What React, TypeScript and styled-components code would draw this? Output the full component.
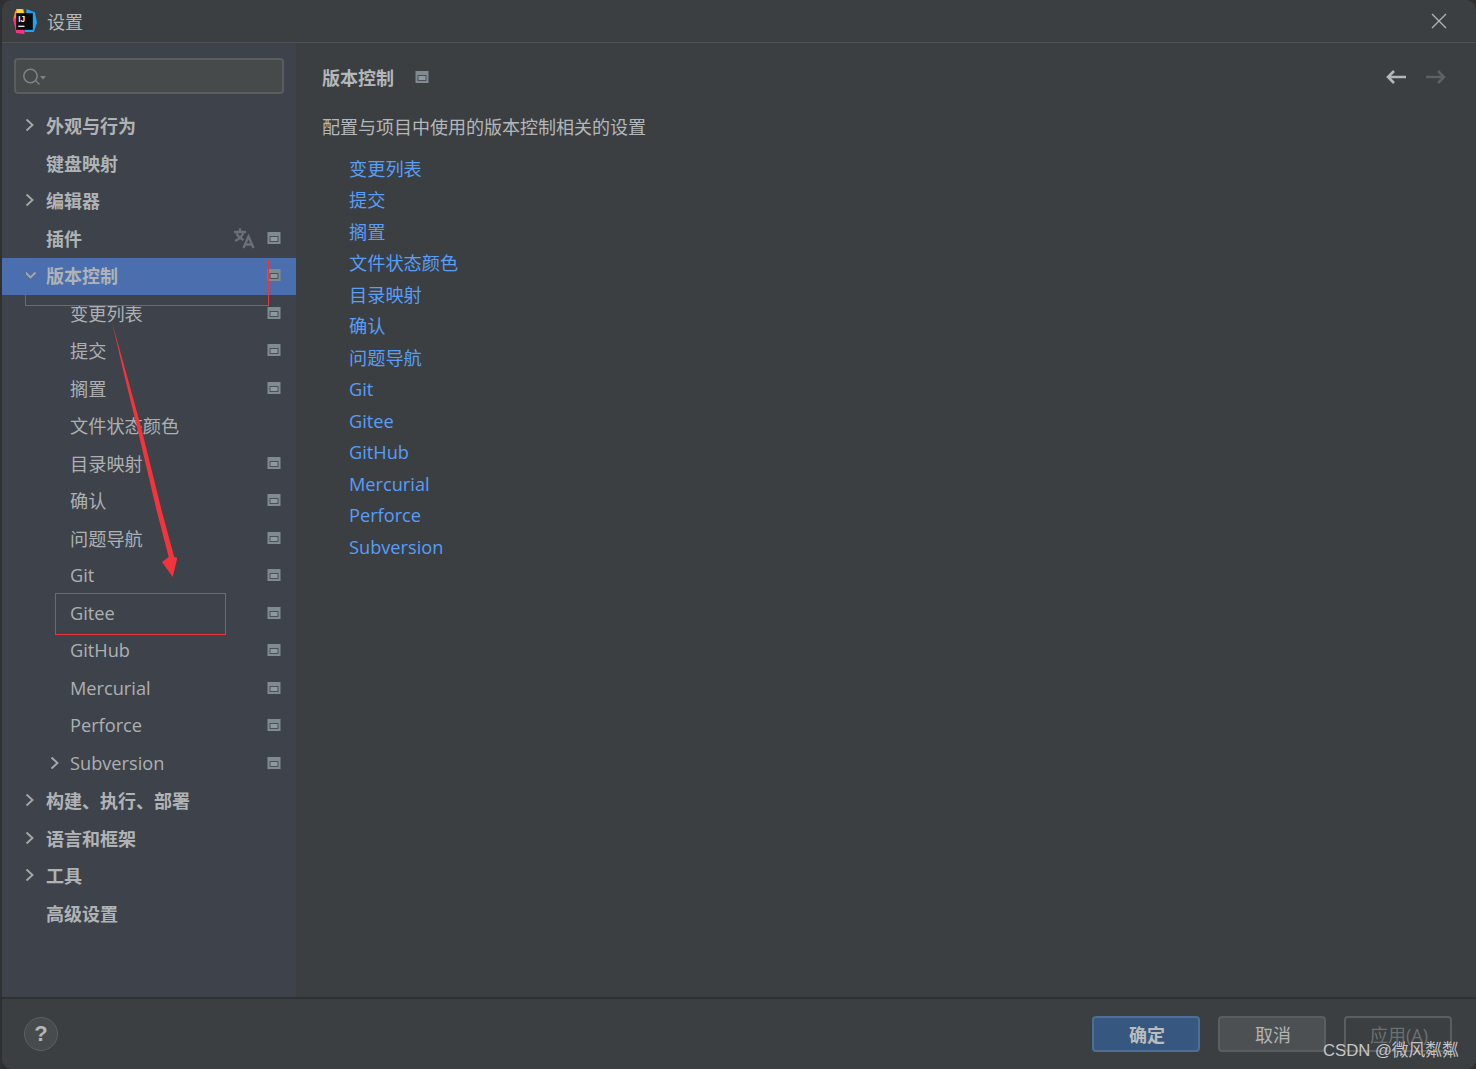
import React from "react";
import styled, { createGlobalStyle } from "styled-components";

const Global = createGlobalStyle`
  html, body { margin: 0; padding: 0; background: #2e3032; }
  body { font-family: "Open Sans", "Noto Sans CJK SC", sans-serif; }
`;

const Page = styled.div`
  position: relative;
  width: 1476px;
  height: 1069px;
  overflow: hidden;
`;

const Win = styled.div`
  width: 1474px;
  height: 1069px;
  margin-left: 2px;
  border-radius: 10px;
  background: #3c3f42;
  display: flex;
  flex-direction: column;
  overflow: hidden;
`;

const TitleBar = styled.div`
  height: 42px;
  flex: none;
  display: flex;
  align-items: center;
  padding: 0 29px 0 10px;
  border-bottom: 1px solid #505356;
  color: #b4b7b9;
  font-size: 18px;
  .name { margin-left: 10px; flex: 1; }
`;

const Body = styled.div`
  flex: 1;
  display: flex;
  min-height: 0;
`;

const Side = styled.div`
  width: 294px;
  flex: none;
  background: #3e434b;
  padding-top: 15px;
`;

const Search = styled.div`
  height: 32px;
  margin: 0 12px;
  border: 2px solid #5a5d5e;
  border-radius: 4px;
  background: #474a4b;
  display: flex;
  align-items: center;
  padding-left: 7px;
`;

const Tree = styled.div`
  margin-top: 13.5px;
`;

const Row = styled.div<{ $sel?: boolean; $depth: number; $bold?: boolean }>`
  box-sizing: border-box;
  height: 37.5px;
  display: flex;
  align-items: center;
  background: ${({ $sel }) => ($sel ? "#4b6eaf" : "transparent")};
  padding: 0 15px 2.4px ${({ $depth }) => ($depth ? 68 : 44)}px;
  position: relative;
  color: ${({ $bold }) => ($bold ? "#b0b3b5" : "#adb0b2")};
  font-size: ${({ $depth }) => ($depth ? 18.2 : 18)}px;
  font-weight: ${({ $bold }) => ($bold ? 700 : 400)};
  .label { flex: 1; }
`;

const Arrow = styled.span<{ $depth: number }>`
  position: absolute;
  left: ${({ $depth }) => ($depth ? 45 : 20)}px;
  top: calc(50% - 1px);
  transform: translateY(-50%);
  display: flex;
`;

const TransSlot = styled.span`
  display: flex;
  margin-right: 12px;
`;

const Main = styled.div`
  flex: 1;
  padding: 21px 29px 0 26px;
  color: #b4b7b9;
`;

const Head = styled.div`
  height: 26px;
  display: flex;
  align-items: center;
  font-size: 18px;
  font-weight: 700;
  color: #b4b7b9;
  .grow { flex: 1; }
  .icon { margin-left: 21px; display: flex; }
  .nav { display: flex; gap: 19px; }
`;

const Desc = styled.div`
  margin-top: 24px;
  font-size: 18px;
  line-height: 26px;
`;

const Links = styled.div`
  margin: 13.5px 0 0 27px;
  display: flex;
  flex-direction: column;
  align-items: flex-start;
`;

const Link = styled.a`
  height: 31.5px;
  line-height: 31.5px;
  font-size: 18.2px;
  color: #589df6;
`;

const Footer = styled.div`
  height: 69px;
  flex: none;
  border-top: 2px solid #2f3133;
  display: flex;
  align-items: center;
  padding: 0 24px 1px 22px;
  background: #3c3f41;
`;

const Help = styled.div`
  width: 32px;
  height: 32px;
  border: 1px solid #5c5f61;
  border-radius: 50%;
  background: #484b4d;
  color: #b4b7b9;
  font: 700 22px "Liberation Sans", sans-serif;
  display: flex;
  align-items: center;
  justify-content: center;
  margin-right: auto;
`;

const Btn = styled.div<{ $kind?: "primary" | "off" }>`
  box-sizing: border-box;
  width: 108px;
  height: 36px;
  margin-left: 18px;
  padding-left: 2px;
  border-radius: 4px;
  border: 2px solid
    ${({ $kind }) => ($kind === "primary" ? "#4b6f96" : "#5b5e60")};
  background: ${({ $kind }) =>
    $kind === "primary" ? "#365880" : $kind === "off" ? "#3c3f41" : "#4c5052"};
  color: ${({ $kind }) =>
    $kind === "primary" ? "#bbbcbd" : $kind === "off" ? "#6c6f71" : "#b0b3b5"};
  font-size: 18px;
  font-weight: ${({ $kind }) => ($kind === "primary" ? 700 : 400)};
  display: flex;
  align-items: center;
  justify-content: center;
`;

const Mark = styled.div<{ $l: number; $t: number; $w: number; $h: number }>`
  position: absolute;
  left: ${({ $l }) => $l}px;
  top: ${({ $t }) => $t}px;
  width: ${({ $w }) => $w}px;
  height: ${({ $h }) => $h}px;
  border: 1px solid #e8363a;
  pointer-events: none;
`;

const Stamp = styled.div`
  position: absolute;
  left: 1323px;
  top: 1037px;
  font: 16.7px "Liberation Sans", "Noto Sans CJK SC", sans-serif;
  color: #c4c6c8;
  white-space: nowrap;
`;

const Overlay = styled.svg`
  position: absolute;
  left: 0;
  top: 0;
  pointer-events: none;
`;

const Chevron = ({ open }: { open?: boolean }) => (
  <svg width="16" height="14" viewBox="0 0 16 14" fill="none" stroke="#a4a7a9" strokeWidth="1.9">
    <path d={open ? "M3.5 4.5l5 5 5-5" : "M4.5 1.5l6 5.5-6 5.5"} />
  </svg>
);

const Proj = () => (
  <svg width="14" height="14" viewBox="0 0 14 14">
    <rect x="0.5" y="1" width="13" height="12" fill="#7f8b91" />
    <rect x="2.5" y="5" width="9" height="6" fill="#4a5056" />
    <rect x="3.5" y="6" width="7" height="4" fill="#8d98a0" />
  </svg>
);

const Trans = () => (
  <svg width="22" height="22" viewBox="0 0 22 22" fill="none" stroke="#6a7074" strokeWidth="2.4">
    <path d="M1 5h12M7 1.5V5M10.5 5c-1 4-4 7-8.5 9M3.5 6.5c1.5 3 4 5 7 6.5" />
    <path d="M10.5 21l5-11.5 5 11.5M12.5 17.5h6.5" />
  </svg>
);

const Logo = () => (
  <svg width="25" height="25" viewBox="0 0 24 24">
    <path d="M3 2l8-2 2 10-12 1z" fill="#ff8a2a" />
    <path d="M4 0l6 0 2 6-7 2z" fill="#fbd431" />
    <path d="M1 9l10-1 1 16-8-1z" fill="#fc2f87" />
    <path d="M14 0l8 3 2 10-3 9-9 0z" fill="#1fa3f0" />
    <rect x="4" y="4" width="16" height="16" fill="#0a0a0a" />
    <text x="6" y="12" fontSize="8" fontWeight="700" fill="#f0f0f0" fontFamily="Liberation Sans">IJ</text>
    <rect x="6" y="16" width="6" height="1.3" fill="#e8e8e8" />
  </svg>
);

const items: { t: string; d: number; arrow?: boolean; open?: boolean; sel?: boolean; proj?: boolean; trans?: boolean }[] = [
  { t: "外观与行为", d: 0, arrow: true },
  { t: "键盘映射", d: 0 },
  { t: "编辑器", d: 0, arrow: true },
  { t: "插件", d: 0, proj: true, trans: true },
  { t: "版本控制", d: 0, arrow: true, open: true, sel: true, proj: true },
  { t: "变更列表", d: 1, proj: true },
  { t: "提交", d: 1, proj: true },
  { t: "搁置", d: 1, proj: true },
  { t: "文件状态颜色", d: 1 },
  { t: "目录映射", d: 1, proj: true },
  { t: "确认", d: 1, proj: true },
  { t: "问题导航", d: 1, proj: true },
  { t: "Git", d: 1, proj: true },
  { t: "Gitee", d: 1, proj: true },
  { t: "GitHub", d: 1, proj: true },
  { t: "Mercurial", d: 1, proj: true },
  { t: "Perforce", d: 1, proj: true },
  { t: "Subversion", d: 1, arrow: true, proj: true },
  { t: "构建、执行、部署", d: 0, arrow: true },
  { t: "语言和框架", d: 0, arrow: true },
  { t: "工具", d: 0, arrow: true },
  { t: "高级设置", d: 0 },
];

const links = ["变更列表", "提交", "搁置", "文件状态颜色", "目录映射", "确认", "问题导航", "Git", "Gitee", "GitHub", "Mercurial", "Perforce", "Subversion"];

export default function App() {
  return (
    <Page>
      <Global />
      <Win>
        <TitleBar>
          <Logo />
          <span className="name">设置</span>
          <svg width="16" height="16" viewBox="0 0 16 16" stroke="#b0b3b5" strokeWidth="1.4">
            <path d="M1 1l14 14M15 1L1 15" />
          </svg>
        </TitleBar>
        <Body>
          <Side>
            <Search>
              <svg width="24" height="20" viewBox="0 0 24 20" fill="none">
                <circle cx="7.5" cy="10" r="6.7" stroke="#7f8385" strokeWidth="1.5" />
                <path d="M12.5 14.5l4 4" stroke="#7f8385" strokeWidth="1.5" />
                <path d="M17 10h6l-3 3.5z" fill="#7f8385" />
              </svg>
            </Search>
            <Tree>
              {items.map((it) => (
                <Row key={it.t} $depth={it.d} $bold={it.d === 0} $sel={it.sel}>
                  {it.arrow && (
                    <Arrow $depth={it.d}>
                      <Chevron open={it.open} />
                    </Arrow>
                  )}
                  <span className="label">{it.t}</span>
                  {it.trans && (
                    <TransSlot>
                      <Trans />
                    </TransSlot>
                  )}
                  {it.proj && <Proj />}
                </Row>
              ))}
            </Tree>
          </Side>
          <Main>
            <Head>
              版本控制
              <span className="icon">
                <Proj />
              </span>
              <span className="grow" />
              <span className="nav">
                <svg width="21" height="16" viewBox="0 0 21 16" fill="none" stroke="#b4b7b9" strokeWidth="2.6">
                  <path d="M20 8H2M8 2L2 8l6 6" />
                </svg>
                <svg width="21" height="16" viewBox="0 0 21 16" fill="none" stroke="#5e6164" strokeWidth="2.6">
                  <path d="M0 8h18M12 2l6 6-6 6" />
                </svg>
              </span>
            </Head>
            <Desc>配置与项目中使用的版本控制相关的设置</Desc>
            <Links>
              {links.map((l) => (
                <Link key={l}>{l}</Link>
              ))}
            </Links>
          </Main>
        </Body>
        <Footer>
          <Help>?</Help>
          <Btn $kind="primary">确定</Btn>
          <Btn>取消</Btn>
          <Btn $kind="off">应用(A)</Btn>
        </Footer>
      </Win>
      <Mark $l={25} $t={259} $w={242} $h={45} />
      <Mark $l={55} $t={593} $w={169} $h={40} />
      <Overlay width="1476" height="1069" viewBox="0 0 1476 1069">
        <path
          d="M112 322L124.7 377 137 427 156.5 510 168.7 557 162 562 172.7 577 177.3 558 174.2 557 161.5 510 141 427 127.3 377z"
          fill="#f5333a"
        />
      </Overlay>
      <Stamp>CSDN @微风粼粼</Stamp>
    </Page>
  );
}
